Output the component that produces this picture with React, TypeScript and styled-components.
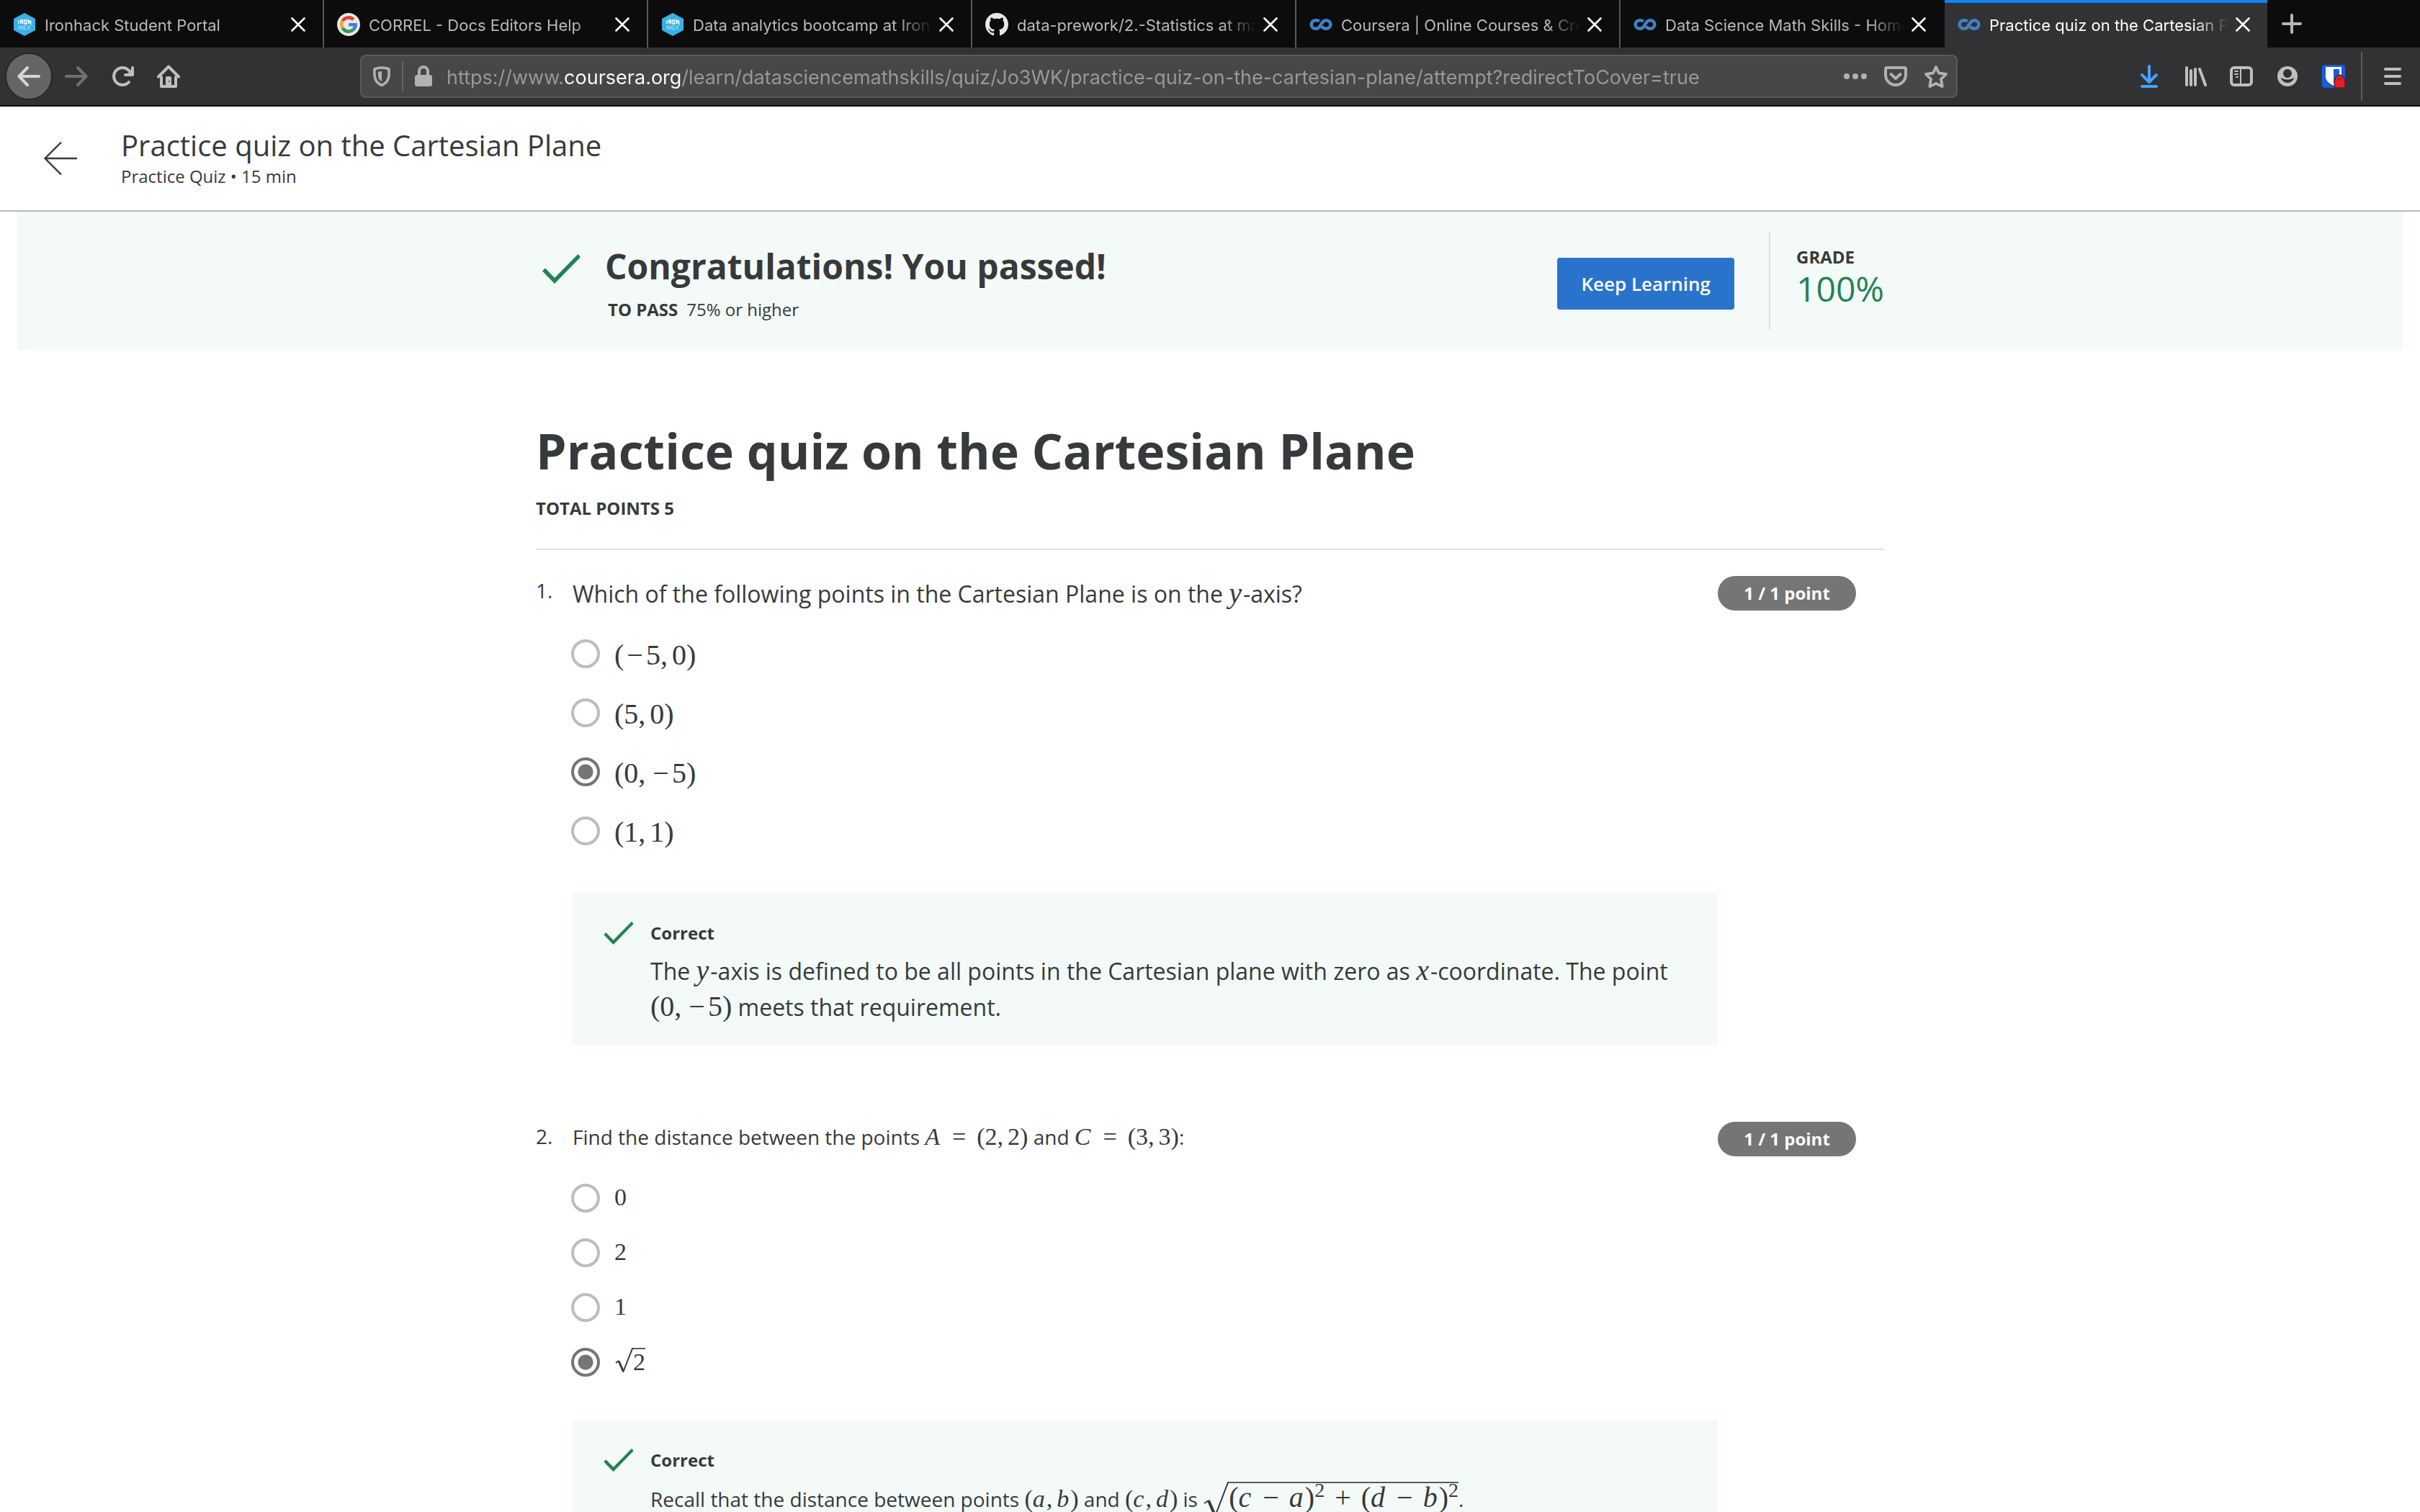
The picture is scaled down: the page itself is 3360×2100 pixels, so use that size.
import React from "react";
import styled, { createGlobalStyle, css } from "styled-components";

const GlobalStyle = createGlobalStyle`
  *, *::before, *::after { box-sizing: border-box; }
  html, body, #root { height: 100%; }
  body {
    margin: 0;
    overflow: hidden;
    background: #ffffff;
    color: #373a3c;
    font-family: "Open Sans", "Noto Sans", sans-serif;
  }
  button { font: inherit; border: 0; padding: 0; background: none; color: inherit; cursor: pointer; }
  h1, h2, p, ol, fieldset { margin: 0; padding: 0; border: 0; min-width: 0; font-weight: inherit; }
  svg { display: block; flex: none; }
`;

/* ---------- Browser chrome ---------- */

const Window = styled.div`
  display: flex;
  flex-direction: column;
  height: 100vh;
`;

const TabStrip = styled.div`
  display: flex;
  height: 66px;
  flex: none;
  background: #0c0c0d;
  color: #b9b9ba;
  font-family: Inter, "Liberation Sans", sans-serif;
  font-size: 22px;
  line-height: 30px;
`;

const Tab = styled.div<{ $active: boolean; $divider: boolean }>`
  display: flex;
  align-items: center;
  flex: 0 1 450px;
  min-width: 0;
  padding: 2px 24px 0 18px;
  border-right: 2px solid ${(p) => (p.$divider ? "#57575a" : "#0c0c0d")};
  ${(p) =>
    p.$active &&
    css`
      background: #323234;
      background-clip: padding-box;
      box-shadow: inset 0 4px 0 #0a84ff;
      color: #ffffff;
    `}
`;

const TabButton = styled.button`
  display: flex;
  align-items: center;
  gap: 12px;
  flex: 1;
  min-width: 0;
  text-align: left;
`;

const TabTitle = styled.span`
  flex: 1;
  min-width: 0;
  padding-top: 2px;
  overflow: hidden;
  white-space: nowrap;
  mask-image: linear-gradient(to left, transparent, #000 48px);
`;

const CloseButton = styled.button`
  margin-left: 10px;
  color: #ffffff;
`;

const NewTabButton = styled.button`
  padding: 0 18px;
  color: #b5b5b6;
`;

const Toolbar = styled.div`
  display: flex;
  align-items: center;
  flex: none;
  height: 82px;
  padding: 0 22px 0 7px;
  background: #323234;
  border-bottom: 2px solid #0c0c0d;
  color: #bfbfc0;
`;

const BackButton = styled.button`
  display: grid;
  place-items: center;
  width: 66px;
  height: 66px;
  border: 2px solid #27272a;
  border-radius: 50%;
  background: #656566;
  color: #d6d6d6;
`;

const ToolGroup = styled.div`
  display: flex;
  align-items: center;
  gap: 32px;
`;

const NavGroup = styled(ToolGroup)`
  margin-left: 17px;
`;

const ToolButton = styled.button<{ $color?: string }>`
  color: ${(p) => p.$color ?? "inherit"};
`;

const MenuDivider = styled.div`
  width: 2px;
  height: 68px;
  margin: 0 26px 0 22px;
  background: #5b5b5e;
`;

const UrlBar = styled.form`
  display: flex;
  align-items: center;
  flex: 1;
  min-width: 0;
  height: 60px;
  margin: 0 250px;
  padding: 0 12px;
  border: 2px solid #5a5a5c;
  border-radius: 8px;
  background: #474749;
  color: #b1b1b3;
`;

const UrlDivider = styled.div`
  width: 2px;
  height: 42px;
  margin: 0 12px;
  background: #66666a;
`;

const UrlInput = styled.input`
  flex: 1;
  min-width: 0;
  height: 40px;
  margin: 0 24px 0 16px;
  padding: 2px 0 0;
  border: 0;
  outline: 0;
  font-family: Inter, "Liberation Sans", sans-serif;
  font-size: 27px;
  color: transparent;
  background: linear-gradient(to right, #99999a 162px, #ffffff 162px 326px, #99999a 326px);
  background-clip: text;
  -webkit-background-clip: text;
`;

const UrlActions = styled.div`
  display: flex;
  gap: 24px;
`;

/* ---------- Course page ---------- */

const PageHeader = styled.header`
  display: flex;
  align-items: flex-start;
  flex: none;
  gap: 60px;
  padding: 26px 60px 32px;
  border-bottom: 2px solid #bababa;
`;

const HeaderBack = styled.button`
  margin-top: 22px;
  color: #373a3c;
`;

const HeaderTitle = styled.h1`
  font-size: 40px;
  line-height: 56px;
`;

const HeaderMeta = styled.p`
  font-size: 24px;
  line-height: 30px;
`;

const Scroller = styled.main`
  flex: 1;
  min-height: 0;
  overflow: hidden;
`;

const Banner = styled.section`
  margin: 0 24px;
  padding: 28px 0;
  background: #f4faf8;
`;

const Column = styled.div`
  width: 100%;
  max-width: 1872px;
  margin: 0 auto;
`;

const BannerRow = styled(Column)`
  display: flex;
  align-items: flex-start;
`;

const Result = styled.div`
  display: flex;
  gap: 34px;
  flex: 1;
  padding: 16px 0 0 9px;
  color: #373a3c;
  > svg { margin-top: 15px; }
`;

const ResultTitle = styled.h2`
  font-size: 48px;
  font-weight: 700;
  line-height: 64px;
`;

const PassLine = styled.p`
  display: flex;
  gap: 12px;
  margin-top: 12px;
  padding-left: 4px;
  font-size: 24px;
  line-height: 32px;
`;

const PrimaryButton = styled.button`
  height: 72px;
  margin: 36px 48px 0 0;
  padding: 0 33px;
  border-radius: 4px;
  background: #2a73cc;
  color: #ffffff;
  font-size: 26px;
  font-weight: 600;
`;

const Grade = styled.div`
  width: 160px;
  height: 136px;
  padding: 19px 0 0 36px;
  border-left: 2px solid #e1e1e1;
`;

const Label = styled.p`
  font-size: 24px;
  font-weight: 700;
  line-height: 32px;
`;

const Score = styled.p`
  color: #1f8354;
  font-size: 48px;
  line-height: 56px;
`;

const QuizHead = styled.div`
  padding: 94px 0 40px;
  border-bottom: 2px solid #e1e1e1;
`;

const QuizTitle = styled.h2`
  margin-bottom: 18px;
  font-size: 68px;
  font-weight: 700;
  line-height: 92px;
`;

const Question = styled.li`
  display: grid;
  grid-template-columns: 51px minmax(0, 1fr) 231px;
  padding: 36px 0 70px;
`;

const Questions = styled.ol`
  list-style: none;
`;

const Ordinal = styled.span`
  font-size: 28px;
  line-height: 40px;
`;

const Prompt = styled.div<{ $large: boolean }>`
  height: 48px;
  font-size: ${(p) => (p.$large ? 32 : 28)}px;
  line-height: ${(p) => (p.$large ? 50 : 42)}px;
`;

const Badge = styled.span`
  justify-self: start;
  width: 192px;
  height: 48px;
  border-radius: 24px;
  background: #757575;
  color: #ffffff;
  font-size: 24px;
  font-weight: 700;
  line-height: 48px;
  text-align: center;
`;

const Options = styled.fieldset<{ $large: boolean }>`
  display: grid;
  justify-items: start;
  gap: ${(p) => (p.$large ? 42 : 36)}px;
  margin: ${(p) => (p.$large ? "40px 0 66px -2px" : "38px 0 60px -2px")};
`;

const Option = styled.label<{ $large: boolean }>`
  display: flex;
  gap: 20px;
  height: 40px;
  font-size: ${(p) => (p.$large ? 32 : 28)}px;
  line-height: ${(p) => (p.$large ? 44 : 38)}px;
  cursor: pointer;
`;

const Radio = styled.input`
  appearance: none;
  flex: none;
  width: 40px;
  height: 40px;
  margin: 0;
  border: 4px solid #bdbdbd;
  border-radius: 50%;
  background: #ffffff;
  &:checked {
    border-color: #757575;
    background: radial-gradient(circle, #757575 10px, #ffffff 11px);
  }
`;

const Feedback = styled.div`
  display: grid;
  grid-template-columns: 65px minmax(0, 1fr);
  padding: 40px 40px 28px 43px;
  background: #f4faf8;
`;

const FeedbackText = styled.p<{ $large: boolean }>`
  margin-top: 12px;
  font-size: ${(p) => (p.$large ? 32 : 28)}px;
  line-height: ${(p) => (p.$large ? 50 : 52)}px;
`;

/* ---------- Formulas ---------- */

const Formula = styled.span<{ $size: number; $block?: boolean }>`
  display: ${(p) => (p.$block ? "block" : "inline")};
  font-family: "Liberation Serif", "Times New Roman", serif;
  font-size: ${(p) => p.$size}px;
  line-height: ${(p) => (p.$block ? "inherit" : "0")};
  white-space: nowrap;
  sup {
    font-size: 28px;
    line-height: 0;
    vertical-align: 14px;
  }
`;

const Glyph = styled.span<{ $side?: number; $after?: number }>`
  margin: 0 ${(p) => p.$after ?? p.$side ?? 0}px 0 ${(p) => p.$side ?? 0}px;
`;

const Variable = styled.i`
  margin-right: 2px;
`;

const Root = styled.span<{ $tall: boolean }>`
  display: inline;
  > svg {
    display: inline-block;
    vertical-align: ${(p) => (p.$tall ? -15 : -5)}px;
  }
`;

const Radicand = styled.span<{ $tall: boolean }>`
  display: inline-block;
  border-top: 2px solid #5a5d5f;
  line-height: ${(p) => (p.$tall ? 39 : 35)}px;
`;

const Tex = ({ src }: { src: string }) => (
  <>
    {[...src].map((ch, i) => {
      if (/[a-zA-Z]/.test(ch)) return <Variable key={i}>{ch}</Variable>;
      if (ch === ",") return <Glyph key={i} $after={6}>,</Glyph>;
      if (ch === "=") return <Glyph key={i} $side={15}>=</Glyph>;
      if (ch === "+") return <Glyph key={i} $side={14}>+</Glyph>;
      if (ch === "^") return <sup key={i}>2</sup>;
      if (ch === "−") return <Glyph key={i} $side={/[(,]/.test(src[i - 1]) ? 4 : 14}>−</Glyph>;
      return <React.Fragment key={i}>{ch}</React.Fragment>;
    })}
  </>
);

const M = ({ src, size = 40 }: { src: string; size?: number }) => (
  <Formula $size={size}>
    <Tex src={src} />
  </Formula>
);

const Sqrt = ({ src, tall = false }: { src: string; tall?: boolean }) => (
  <Root $tall={tall}>
    {tall ? (
      <svg width="36" height="50" viewBox="0 0 36 50" fill="none" stroke="#373a3c">
        <path d="M2 30l6-4" strokeWidth="2" />
        <path d="M8 26l9 21" strokeWidth="4" />
        <path d="M17 48L35 1h2" strokeWidth="2" />
      </svg>
    ) : (
      <svg width="26" height="36" viewBox="0 0 26 36" fill="none" stroke="#373a3c">
        <path d="M2 21l4-3" strokeWidth="2" />
        <path d="M6 18l6 14" strokeWidth="3" />
        <path d="M12 34L25 1h2" strokeWidth="2" />
      </svg>
    )}
    <Radicand $tall={tall}>
      <Tex src={src} />
    </Radicand>
  </Root>
);

/* ---------- Icons ---------- */

const Check = ({ width, height }: { width: number; height: number }) => (
  <svg width={width} height={height} viewBox="0 0 53 41" fill="#1f8354" aria-hidden>
    <path d="M49.5 0L53 4 17 41 0 23.5 4 19.5 17 33z" />
  </svg>
);

const Icon = ({ children, size = 32 }: { children: React.ReactNode; size?: number }) => (
  <svg
    width={size}
    height={size}
    viewBox={`0 0 ${size} ${size}`}
    fill="none"
    stroke="currentColor"
    strokeWidth="4"
    strokeLinecap="round"
    strokeLinejoin="round"
    aria-hidden
  >
    {children}
  </svg>
);

const IronhackLogo = () => (
  <svg width="32" height="32" viewBox="0 0 32 32" aria-hidden>
    <path d="M16 0l15 8v16l-15 8L1 24V8z" fill="#39b1e6" />
    <g fill="none" stroke="#ffffff" strokeWidth="1.4">
      <path d="M8 10v5M11 15v-5h2.500v2.500H11M13 12.500l1 2.500M16 10h3v5h-3zM21.500 15v-5l3 5v-5" />
    </g>
    <g fill="none" stroke="#c4e8f8" strokeWidth="0.8">
      <path d="M8 17.500v5.500M8 20h2.500M10.500 17.500v5.500M12 23l1.500-5.500L15 23M19 17.500h-2.500V23H19M21 17.500v5.500M24.500 17.500l-3 3 3 2.500" />
    </g>
  </svg>
);

const GoogleLogo = () => (
  <svg width="32" height="32" viewBox="0 0 32 32" aria-hidden>
    <circle cx="16" cy="16" r="16" fill="#e8e8e9" />
    <g fill="none" strokeWidth="4.600">
      <path d="M22.800 9.200A9.700 9.700 0 0 0 7.600 11.200" stroke="#d9443a" />
      <path d="M7.600 11.200A9.700 9.700 0 0 0 7.600 20.800" stroke="#e7ae2c" />
      <path d="M7.600 20.800A9.700 9.700 0 0 0 22.400 23.300" stroke="#359a4f" />
      <path d="M22.400 23.300A9.700 9.700 0 0 0 25.700 16.200H16.200" stroke="#4480e0" />
    </g>
  </svg>
);

const GithubLogo = () => (
  <svg width="32" height="32" viewBox="0 0 16 16" fill="#e8e8e9" aria-hidden>
    <path d="M8 0C3.58 0 0 3.58 0 8c0 3.54 2.29 6.53 5.47 7.59.4.07.55-.17.55-.38 0-.19-.01-.82-.01-1.49-2.01.37-2.53-.49-2.69-.94-.09-.23-.48-.94-.82-1.13-.28-.15-.68-.52-.01-.53.63-.01 1.08.58 1.23.82.72 1.21 1.87.87 2.33.66.07-.52.28-.87.51-1.07-1.78-.2-3.64-.89-3.64-3.95 0-.87.31-1.59.82-2.15-.08-.2-.36-1.02.08-2.12 0 0 .67-.21 2.2.82.64-.18 1.32-.27 2-.27.68 0 1.36.09 2 .27 1.53-1.04 2.2-.82 2.2-.82.44 1.1.16 1.92.08 2.12.51.56.82 1.27.82 2.15 0 3.07-1.87 3.75-3.65 3.95.29.25.54.73.54 1.48 0 1.07-.01 1.93-.01 2.2 0 .21.15.46.55.38A8.013 8.013 0 0 0 16 8c0-4.420-3.580-8-8-8z" />
  </svg>
);

const CourseraLogo = () => (
  <svg width="32" height="32" viewBox="0 0 32 32" fill="none" stroke="#3f82c4" strokeWidth="4.600" aria-hidden>
    <path d="M13.800 11.600C12.300 10.500 10.600 10.200 8.900 10.200 5.400 10.200 2.700 12.700 2.700 16s2.700 5.800 6.200 5.800c3.400 0 5.200-2.300 7-5.500 1.800-3.300 3.600-6.100 7.200-6.100 3.500 0 6.200 2.500 6.200 5.800s-2.700 5.800-6.200 5.800c-2.300 0-4.200-.9-5.500-3.300" />
  </svg>
);

const CloseIcon = () => (
  <svg width="20" height="20" viewBox="0 0 20 20" fill="none" stroke="currentColor" strokeWidth="2.600" strokeLinecap="round" aria-hidden>
    <path d="M1.500 1.500l17 17M18.500 1.500l-17 17" />
  </svg>
);

const ShieldIcon = () => (
  <Icon>
    <path d="M16 4c4 0 7 .6 10 2v8c0 6.500-3.500 11.500-10 14.500C9.500 25.500 6 20.500 6 14V6c3-1.400 6-2 10-2z" strokeWidth="3.600" />
    <path d="M16 9c-2 0-3.500.2-5 .7V14c0 4 1.600 7.200 5 9.500z" fill="currentColor" stroke="none" />
  </Icon>
);

const LockIcon = () => (
  <Icon>
    <path d="M10 14V9a6 6 0 0 1 12 0v5" />
    <rect x="4" y="14" width="24" height="16" rx="3" fill="currentColor" stroke="none" />
  </Icon>
);

/* ---------- Data ---------- */

const tabs = [
  { title: "Ironhack Student Portal", logo: IronhackLogo },
  { title: "CORREL - Docs Editors Help", logo: GoogleLogo },
  { title: "Data analytics bootcamp at Ironhack", logo: IronhackLogo },
  { title: "data-prework/2.-Statistics at master", logo: GithubLogo },
  { title: "Coursera | Online Courses & Credentials", logo: CourseraLogo },
  { title: "Data Science Math Skills - Home", logo: CourseraLogo },
  { title: "Practice quiz on the Cartesian Plane", logo: CourseraLogo },
];
const activeTab = tabs.length - 1;

const questions = [
  {
    large: true,
    prompt: (
      <>
        Which of the following points in the Cartesian Plane is on the <M src="y" />
        -axis?
      </>
    ),
    options: ["(−5,0)", "(5,0)", "(0,−5)", "(1,1)"].map((s) => <Tex key={s} src={s} />),
    chosen: 2,
    feedback: (
      <>
        The <M src="y" />
        -axis is defined to be all points in the Cartesian plane with zero as <M src="x" />
        -coordinate. The point <M src="(0,−5)" /> meets that requirement.
      </>
    ),
  },
  {
    large: false,
    prompt: (
      <>
        Find the distance between the points <M src="A=(2,2)" size={34} /> and <M src="C=(3,3)" size={34} />:
      </>
    ),
    options: [...["0", "2", "1"].map((s) => <Tex key={s} src={s} />), <Sqrt key="r" src="2" />],
    chosen: 3,
    feedback: (
      <>
        Recall that the distance between points <M src="(a,b)" size={34} /> and <M src="(c,d)" size={34} /> is{" "}
        <Formula $size={40}>
          <Sqrt src="(c−a)^+(d−b)^" tall />
        </Formula>
        .
      </>
    ),
  },
];

export default function App() {
  return (
    <Window>
      <GlobalStyle />
      <TabStrip>
        {tabs.map(({ title, logo: Logo }, i) => (
          <Tab key={title} $active={i === activeTab} $divider={i < activeTab - 1}>
            <TabButton>
              <Logo />
              <TabTitle>{title}</TabTitle>
            </TabButton>
            <CloseButton aria-label={`Close ${title}`}>
              <CloseIcon />
            </CloseButton>
          </Tab>
        ))}
        <NewTabButton aria-label="New tab">
          <Icon size={28}>
            <path d="M14 2v24M2 14h24" />
          </Icon>
        </NewTabButton>
      </TabStrip>

      <Toolbar>
        <BackButton aria-label="Back">
          <Icon>
            <path d="M30 16H3M14 4L2.500 16 14 28" />
          </Icon>
        </BackButton>
        <NavGroup>
          <ToolButton aria-label="Forward" $color="#707072">
            <Icon>
              <path d="M2 16h27M18 4l11.500 12L18 28" />
            </Icon>
          </ToolButton>
          <ToolButton aria-label="Reload">
            <Icon>
              <path d="M25 24A12 12 0 1 1 25 8" />
              <path d="M30 4v12H20z" fill="currentColor" stroke="none" />
              <path d="M30 4v10H20" strokeWidth="4" />
            </Icon>
          </ToolButton>
          <ToolButton aria-label="Home">
            <Icon>
              <path d="M2 16.500L16 2.500l14 14M6 17v13h20V17" />
              <path d="M12 29V18a2 2 0 0 1 2-2h4a2 2 0 0 1 2 2v11z" fill="currentColor" stroke="none" />
              <circle cx="17" cy="23" r="1" fill="#323234" stroke="none" />
            </Icon>
          </ToolButton>
        </NavGroup>

        <UrlBar>
          <ShieldIcon />
          <UrlDivider />
          <LockIcon />
          <UrlInput
            aria-label="Address"
            spellCheck={false}
            defaultValue="https://www.coursera.org/learn/datasciencemathskills/quiz/Jo3WK/practice-quiz-on-the-cartesian-plane/attempt?redirectToCover=true"
          />
          <UrlActions>
            <ToolButton type="button" aria-label="Page actions">
              <Icon>
                <g fill="currentColor" stroke="none">
                  <circle cx="4" cy="16" r="4" />
                  <circle cx="16" cy="16" r="4" />
                  <circle cx="28" cy="16" r="4" />
                </g>
              </Icon>
            </ToolButton>
            <ToolButton type="button" aria-label="Save to Pocket">
              <Icon>
                <path d="M2 6a2 2 0 0 1 2-2h24a2 2 0 0 1 2 2v8a14 14 0 0 1-28 0z" />
                <path d="M9.500 13l6.500 6 6.500-6" />
              </Icon>
            </ToolButton>
            <ToolButton type="button" aria-label="Bookmark">
              <Icon>
                <path d="M16 3l4 8.500 10 1.300-7 7 1.700 10.200L16 26l-8.700 4L9 19.800l-7-7 10-1.300z" strokeWidth="3.800" />
              </Icon>
            </ToolButton>
          </UrlActions>
        </UrlBar>

        <ToolGroup>
          <ToolButton aria-label="Downloads" $color="#45a1ff">
            <Icon>
              <path d="M16 2v22M6 14l10 10 10-10M6 30h20" />
            </Icon>
          </ToolButton>
          <ToolButton aria-label="Library">
            <Icon>
              <path d="M4 4v24M10 8v20M16 6v22M22 6l8 22" />
            </Icon>
          </ToolButton>
          <ToolButton aria-label="Sidebars">
            <Icon>
              <rect x="2" y="4" width="28" height="24" rx="4" />
              <path d="M15 4v24M7 9h4M7 13h4M9 17h2" strokeWidth="2" />
            </Icon>
          </ToolButton>
          <ToolButton aria-label="Account">
            <Icon>
              <circle cx="16" cy="16" r="14" fill="currentColor" stroke="none" />
              <g fill="#323234" stroke="none">
                <circle cx="16" cy="12" r="6" />
                <path d="M7 18c2 .3 3 2.500 9 2.500s7-2.200 9-2.500c-.8 4-4.500 7-9 7s-8.200-3-9-7z" />
              </g>
            </Icon>
          </ToolButton>
          <ToolButton aria-label="Bitwarden">
            <svg width="32" height="32" viewBox="0 0 32 32" aria-hidden>
              <rect width="32" height="32" rx="4" fill="#175ddc" />
              <path d="M5 3h22v13c0 6-5 10-11 13C10 26 5 22 5 16z" fill="#ffffff" />
              <path d="M16 6h8v10c0 4-3 7-8 10z" fill="#175ddc" />
              <path d="M20.500 22v-2a4 4 0 0 1 8 0v2" fill="none" stroke="#4a1018" strokeWidth="5" />
              <rect x="17" y="20" width="15" height="12" rx="2" fill="#ee1c25" stroke="#4a1018" strokeWidth="1" />
              <path d="M20.500 21v-1a4 4 0 0 1 8 0v1" fill="none" stroke="#ee1c25" strokeWidth="3" />
            </svg>
          </ToolButton>
        </ToolGroup>
        <MenuDivider />
        <ToolButton aria-label="Menu">
          <Icon>
            <path d="M6 6h20M6 16h20M6 26h20" />
          </Icon>
        </ToolButton>
      </Toolbar>

      <PageHeader>
        <HeaderBack aria-label="Back to course">
          <svg width="48" height="48" viewBox="0 0 48 48" fill="none" stroke="currentColor" strokeWidth="2.400" aria-hidden>
            <path d="M47 24H2M25 1.500L2.500 24 25 46.500" />
          </svg>
        </HeaderBack>
        <div>
          <HeaderTitle>Practice quiz on the Cartesian Plane</HeaderTitle>
          <HeaderMeta>Practice Quiz • 15 min</HeaderMeta>
        </div>
      </PageHeader>

      <Scroller>
        <Banner>
          <BannerRow>
            <Result>
              <Check width={53} height={41} />
              <div>
                <ResultTitle>Congratulations! You passed!</ResultTitle>
                <PassLine>
                  <b>TO PASS</b>
                  <span>75% or higher</span>
                </PassLine>
              </div>
            </Result>
            <PrimaryButton>Keep Learning</PrimaryButton>
            <Grade>
              <Label>GRADE</Label>
              <Score>100%</Score>
            </Grade>
          </BannerRow>
        </Banner>

        <Column>
          <QuizHead>
            <QuizTitle>Practice quiz on the Cartesian Plane</QuizTitle>
            <Label>TOTAL POINTS 5</Label>
          </QuizHead>
          <Questions>
            {questions.map((q, n) => (
              <Question key={n}>
                <Ordinal>{n + 1}.</Ordinal>
                <div>
                  <Prompt id={`prompt-${n}`} $large={q.large}>
                    {q.prompt}
                  </Prompt>
                  <Options $large={q.large} aria-labelledby={`prompt-${n}`}>
                    {q.options.map((option, i) => (
                      <Option key={i} $large={q.large}>
                        <Radio type="radio" name={`question-${n}`} defaultChecked={i === q.chosen} />
                        <Formula $block $size={q.large ? 40 : 34}>
                          {option}
                        </Formula>
                      </Option>
                    ))}
                  </Options>
                  <Feedback>
                    <Check width={42} height={32} />
                    <div>
                      <Label>Correct</Label>
                      <FeedbackText $large={q.large}>{q.feedback}</FeedbackText>
                    </div>
                  </Feedback>
                </div>
                <Badge>1 / 1 point</Badge>
              </Question>
            ))}
          </Questions>
        </Column>
      </Scroller>
    </Window>
  );
}
